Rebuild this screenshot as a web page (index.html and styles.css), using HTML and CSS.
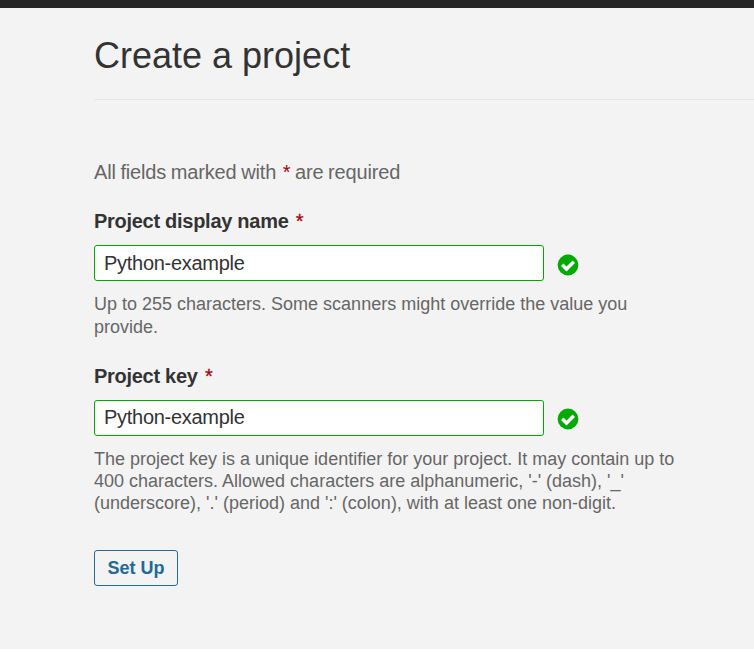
FILE: index.html
```html
<!DOCTYPE html>
<html lang="en">
<head>
<meta charset="utf-8">
<title>Create a project</title>
<link rel="stylesheet" href="styles.css">
</head>
<body>
<div class="topbar"></div>
<main class="page">
  <header class="page-header"><h1>Create a project</h1></header>
  <form class="form">
    <p class="note">All fields marked with <span class="mandatory">*</span> are required</p>
    <section class="field field-name">
      <label for="name">Project display name <span class="mandatory">*</span></label>
      <div class="control">
        <input id="name" type="text" value="Python-example">
        <svg class="check" viewBox="0 0 22 22"><circle cx="11" cy="11" r="10.4"/><path d="M5.2 10.7l4.3 4.3 7.3-7.3"/></svg>
      </div>
      <p class="hint">Up to 255 characters. Some scanners might override the value you<br>provide.</p>
    </section>
    <section class="field field-key">
      <label for="key">Project key <span class="mandatory">*</span></label>
      <div class="control">
        <input id="key" type="text" value="Python-example">
        <svg class="check" viewBox="0 0 22 22"><circle cx="11" cy="11" r="10.4"/><path d="M5.2 10.7l4.3 4.3 7.3-7.3"/></svg>
      </div>
      <p class="hint">The project key is a unique identifier for your project. It may contain up to<br>400 characters. Allowed characters are alphanumeric, '-' (dash), '_'<br>(underscore), '.' (period) and ':' (colon), with at least one non-digit.</p>
    </section>
    <button class="submit" type="button">Set Up</button>
  </form>
</main>
</body>
</html>
```
FILE: styles.css
```css
* { box-sizing: border-box; }
body {
  margin: 0;
  height: 649px;
  overflow: hidden;
  background: #f3f3f3;
  color: #666;
  font-family: "Liberation Sans", Arial, sans-serif;
}
.topbar { height: 8px; background: #262626; }
.page { padding-left: 94px; }
.page-header { height: 92px; padding-top: 26px; border-bottom: 1px solid #e6e6e6; }
h1 { margin: 0; font-size: 36px; line-height: 44px; font-weight: 400; color: #333; }
.note { margin: 0; padding-top: 60px; font-size: 20px; line-height: 24px; letter-spacing: -0.15px; word-spacing: -0.8px; }
.mandatory { color: #a4030f; font-weight: 400; line-height: 1; }
.note .mandatory { margin-left: 2px; }
label { display: block; font-size: 20px; line-height: 24px; font-weight: 700; color: #333; letter-spacing: -0.28px; }
label .mandatory { margin-left: 2px; -webkit-text-stroke: 0.3px #a4030f; }
.field-name { margin-top: 25px; }
.field-name .hint { line-height: 23px; margin-top: 12px; }
.field-key { margin-top: 25px; }
.control { display: flex; align-items: center; gap: 13px; margin-top: 12px; }
input {
  width: 450px;
  height: 36px;
  padding: 0 9px;
  border: 1px solid #0a0;
  border-radius: 3px;
  background: #fff;
  color: #333;
  font: 20px "Liberation Sans", Arial, sans-serif;
  letter-spacing: -0.28px;
}
.field-key input { padding-bottom: 2px; }
.check { width: 22px; height: 22px; margin-top: 3px; }
.field-key .check { margin-top: 1px; }
.check circle { fill: #0a0; }
.check path { fill: none; stroke: #fff; stroke-width: 3.4; }
.hint { margin: 12px 0 0; font-size: 18px; line-height: 22px; }
.submit {
  width: 84px;
  height: 36px;
  margin-top: 36px;
  padding: 0;
  border: 1px solid #236a97;
  border-radius: 3px;
  background: transparent;
  color: #236a97;
  font: 700 18px "Liberation Sans", Arial, sans-serif;
}
```
